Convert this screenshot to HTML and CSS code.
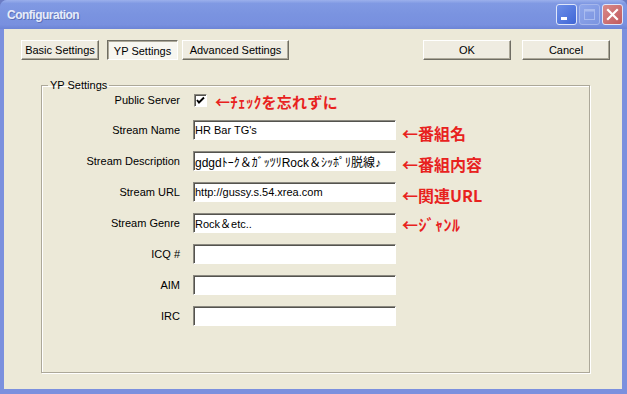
FILE: index.html
```html
<!DOCTYPE html>
<html lang="ja">
<head>
  <meta charset="UTF-8" />
  <meta name="viewport" content="width=device-width, initial-scale=1.0"/>
  <title>Configuration</title>
  <link rel="stylesheet" href="styles.css">
</head>
<body>

  <div class="window">
    <div class="titlebar">
      <span class="title">Configuration</span>
      <div class="caption-buttons">
        <span class="cap-btn cap-min">
          <svg width="19" height="19" viewBox="0 0 19 19"><rect x="4" y="12" width="6" height="3" fill="#fff"/></svg>
        </span>
        <span class="cap-btn cap-max">
          <svg width="19" height="19" viewBox="0 0 19 19"><rect x="4.5" y="4.5" width="10" height="10" fill="none" stroke="#a9bbef" stroke-width="1"/><rect x="4.5" y="4.5" width="10" height="2" fill="#a9bbef"/></svg>
        </span>
        <span class="cap-btn cap-close">
          <svg width="19" height="19" viewBox="0 0 19 19"><path d="M5 5 L14 14 M14 5 L5 14" stroke="#fff" stroke-width="2.2" stroke-linecap="square"/></svg>
        </span>
      </div>
    </div>

    <div class="client">
      <div class="toolbar">
        <div class="tabs">
          <button class="btn tab-basic">Basic Settings</button>
          <button class="btn btn-pressed tab-yp">YP Settings</button>
          <button class="btn tab-adv">Advanced Settings</button>
        </div>
        <div class="actions">
          <button class="btn btn-action">OK</button>
          <button class="btn btn-action">Cancel</button>
        </div>
      </div>

      <fieldset class="group">
        <legend>YP Settings</legend>
        <div class="form">
          <label>Public Server</label>
          <div class="check-row">
            <span class="checkbox">
              <svg width="11" height="11" viewBox="0 0 11 11"><polyline points="2,5 4,7.5 9,2.5" fill="none" stroke="#000" stroke-width="1.9"/></svg>
            </span>
            <span class="note note-small">←ﾁｪｯｸを忘れずに</span>
          </div>

          <label>Stream Name</label>
          <input type="text" value="HR Bar TG's" />
          <span class="note">←番組名</span>

          <label>Stream Description</label>
          <input type="text" class="input-jp" value="gdgdﾄｰｸ＆ｶﾞｯﾂﾘRock＆ｼｯﾎﾟﾘ脱線♪" />
          <span class="note">←番組内容</span>

          <label>Stream URL</label>
          <input type="text" value="http://gussy.s.54.xrea.com" />
          <span class="note">←関連URL</span>

          <label>Stream Genre</label>
          <input type="text" value="Rock＆etc.." />
          <span class="note note-kana">←ｼﾞｬﾝﾙ</span>

          <label>ICQ #</label>
          <input type="text" value="" />
          <span></span>

          <label>AIM</label>
          <input type="text" value="" />
          <span></span>

          <label>IRC</label>
          <input type="text" value="" />
          <span></span>
        </div>
      </fieldset>
    </div>
  </div>

</body>
</html>
```

FILE: styles.css
```css
body {
  margin: 0;
  background: #6b7cc4;
  font-family: 'Liberation Sans', 'Noto Sans CJK JP', sans-serif;
  font-size: 11px;
  color: #000;
}
.window {
  width: 627px;
  height: 394px;
  background: #7b90de;
  border-radius: 7px 7px 0 0;
  overflow: hidden;
}

/* title bar */
.titlebar {
  height: 29px;
  display: flex;
  align-items: center;
  justify-content: space-between;
  padding: 0 4px 0 7px;
  box-sizing: border-box;
  background: linear-gradient(#9bb0ec 0%, #8099e3 12%, #7a93e0 50%, #7890df 85%, #6c84d6 100%);
}
.title {
  font-weight: bold;
  font-size: 12px;
  letter-spacing: -0.5px;
  color: #e6ecfa;
  text-shadow: 1px 1px 0 #5d70b8;
}
.caption-buttons {
  display: flex;
  gap: 2px;
}
.cap-btn {
  width: 21px;
  height: 21px;
  box-sizing: border-box;
  border: 1px solid #dfe6fa;
  border-radius: 3px;
  display: flex;
  align-items: center;
  justify-content: center;
}
.cap-min {
  background: linear-gradient(135deg, #6d8fe8, #3f66d6);
}
.cap-max {
  background: linear-gradient(135deg, #8ea6ea, #7b94e0);
  border-color: #a5b6ec;
}
.cap-close {
  background: linear-gradient(135deg, #d98a8a, #c15a5e);
}

/* client area */
.client {
  margin: 0 5px 0 4px;
  height: 360px;
  background: #ece9d8;
  display: flex;
  flex-direction: column;
}
.toolbar {
  display: flex;
  justify-content: space-between;
  padding: 11px 12px 0 17px;
}
.tabs, .actions {
  display: flex;
}
.btn {
  height: 20px;
  padding: 0;
  font-family: 'Liberation Sans', sans-serif;
  font-size: 11px;
  color: #000;
  background: #efece1;
  border: 1px solid;
  border-color: #fff #6f6d63 #6f6d63 #fff;
  box-shadow: inset -1px -1px 0 #aca899;
}
.tab-basic { width: 78px; }
.tab-yp { width: 71px; margin-left: 8px; }
.tab-adv { width: 107px; margin-left: 4px; }
.btn-pressed {
  background: #f7f6f0;
  border-color: #6f6d63 #fff #fff #6f6d63;
  box-shadow: inset 1px 1px 0 #aca899;
  padding-top: 2px;
}
.btn-action {
  width: 88px;
  margin-left: 11px;
}

/* group box */
.group {
  flex: 1;
  margin: 20px 32px 16px 37px;
  padding: 1px 8px 0;
  border: 1px solid #aca899;
  box-shadow: inset 1px 1px 0 #fff, 1px 1px 0 #fff;
  min-width: 0;
}
.group legend {
  padding: 0 2px;
  margin-left: -2px;
  line-height: 10px;
  font-size: 11px;
}
.form {
  display: grid;
  grid-template-columns: 130px 216px 1fr;
  grid-template-rows: 18px repeat(7, 20px);
  row-gap: 11px;
  align-items: center;
}
.form label {
  text-align: right;
  white-space: nowrap;
}
.form input {
  margin-left: 13px;
  width: 203px;
  height: 20px;
  box-sizing: border-box;
  padding: 0 1px;
  font-family: 'Liberation Sans', 'Noto Sans CJK JP', sans-serif;
  font-size: 11px;
  color: #000;
  background: #fff;
  border: 1px solid;
  border-color: #8a887f #fff #fff #8a887f;
  box-shadow: inset 1px 1px 0 #54534e;
  outline: none;
}
.form .input-jp {
  font-size: 12px;
}
.check-row {
  grid-column: 2 / 4;
  display: flex;
  align-items: center;
  margin-left: 14px;
}
.checkbox {
  width: 13px;
  height: 13px;
  box-sizing: border-box;
  background: #fff;
  border: 1px solid;
  border-color: #8a887f #fff #fff #8a887f;
  box-shadow: inset 1px 1px 0 #54534e;
  display: flex;
  align-items: center;
  justify-content: center;
}
.note {
  padding-left: 6px;
  padding-top: 5px;
  font-family: 'Noto Sans CJK JP', sans-serif;
  font-weight: bold;
  font-size: 16px;
  line-height: 16px;
  color: #e8221e;
  white-space: nowrap;
}
.note-small {
  font-size: 15px;
  padding-top: 2px;
}
.note-kana {
  font-size: 16px;
  letter-spacing: 0.5px;
  padding-top: 2px;
}
.check-row .note {
  padding-left: 8px;
  padding-top: 3px;
  letter-spacing: 0.3px;
}
```
